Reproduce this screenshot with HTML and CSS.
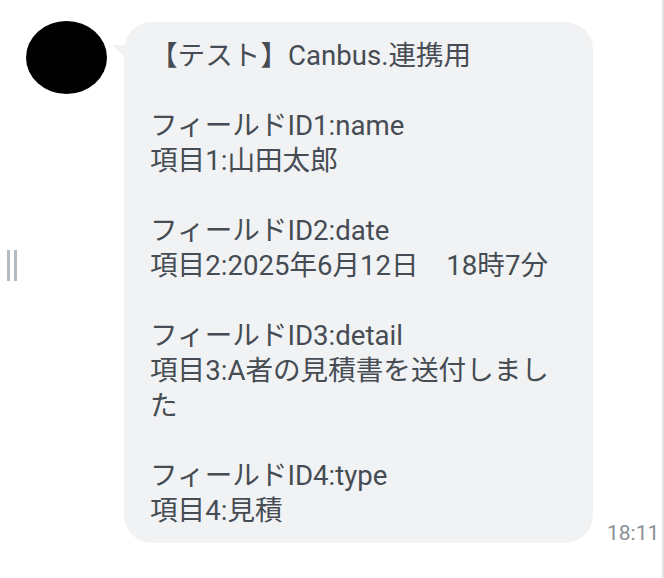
FILE: index.html
```html
<!DOCTYPE html>
<html lang="ja">
<head>
<meta charset="utf-8">
<link rel="stylesheet" href="styles.css">
</head>
<body>
<div class="pane">
  <div class="handle"><span></span><span></span></div>
  <div class="row">
    <div class="avatar"></div>
    <div class="bubble">
      <div class="text">【テスト】Canbus.連携用

フィールドID1:name
項目1:山田太郎

フィールドID2:date
項目2:2025年6月12日　18時7分

フィールドID3:detail
項目3:A者の見積書を送付しました

フィールドID4:type
項目4:見積</div>
    </div>
    <div class="time">18:11</div>
  </div>
</div>
</body>
</html>
```

FILE: styles.css
```css
html, body {
  margin: 0;
  padding: 0;
  background: #ffffff;
}
.pane {
  position: relative;
  width: 662px;
  height: 578px;
  border-right: 2px solid #e2e2e2;
  font-family: "Roboto", "Noto Sans CJK JP", sans-serif;
}
.handle {
  position: absolute;
  left: 7px;
  top: 250px;
  display: flex;
  gap: 4px;
}
.handle span {
  width: 3px;
  height: 31px;
  background: #b3bbc2;
}
.row {
  display: flex;
  align-items: flex-start;
  padding: 21px 0 0 26px;
}
.avatar {
  width: 81px;
  height: 73px;
  border-radius: 50%;
  background: #000;
  flex: none;
}
.bubble {
  position: relative;
  margin-left: 17px;
  margin-top: 1px;
  width: 469px;
  box-sizing: border-box;
  padding: 16px 24px 15px 26px;
  background: #f1f2f4;
  border-radius: 28px;
  flex: none;
}
.bubble::before {
  content: "";
  position: absolute;
  left: -12px;
  top: 23px;
  width: 14px;
  height: 13px;
  background: #f1f2f4;
  clip-path: polygon(0 0, 100% 0, 100% 100%);
}
.text {
  white-space: pre-wrap;
  font-size: 27.6px;
  line-height: 35px;
  color: #464c53;
  word-break: break-all;
}
.time {
  align-self: flex-end;
  margin-left: 14px;
  margin-bottom: -2px;
  font-size: 21px;
  line-height: 24px;
  color: #8a9096;
  white-space: nowrap;
}
```
